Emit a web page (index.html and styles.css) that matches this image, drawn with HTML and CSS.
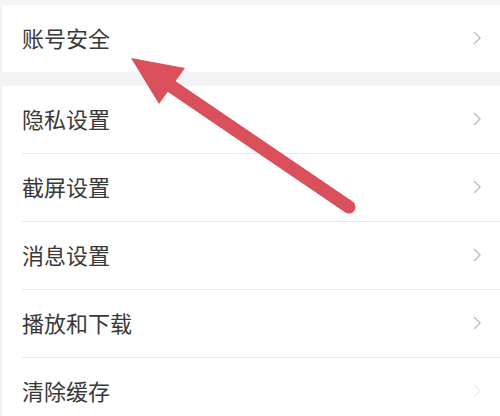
FILE: index.html
```html
<!DOCTYPE html>
<html lang="zh">
<head>
<meta charset="utf-8">
<link rel="stylesheet" href="styles.css">
</head>
<body>
<div class="page">
  <div class="group first">
    <div class="row"><span class="label">账号安全</span><svg class="chev" viewBox="0 0 8 14"><path d="M1 1 L7 7 L1 13"/></svg></div>
  </div>
  <div class="group">
    <div class="row"><span class="label">隐私设置</span><svg class="chev" viewBox="0 0 8 14"><path d="M1 1 L7 7 L1 13"/></svg></div>
    <div class="row"><span class="label">截屏设置</span><svg class="chev" viewBox="0 0 8 14"><path d="M1 1 L7 7 L1 13"/></svg></div>
    <div class="row"><span class="label">消息设置</span><svg class="chev" viewBox="0 0 8 14"><path d="M1 1 L7 7 L1 13"/></svg></div>
    <div class="row"><span class="label">播放和下载</span><svg class="chev" viewBox="0 0 8 14"><path d="M1 1 L7 7 L1 13"/></svg></div>
    <div class="row"><span class="label">清除缓存</span><svg class="chev faint" viewBox="0 0 8 14"><path d="M1 1 L7 7 L1 13"/></svg></div>
  </div>
  <svg class="arrow" viewBox="0 0 500 416" width="500" height="416">
    <line x1="349" y1="207" x2="168" y2="84" stroke="#d9505a" stroke-width="13" stroke-linecap="round"/>
    <polygon points="131,58 185,68 159,104" fill="#d9505a"/>
  </svg>
</div>
</body>
</html>
```

FILE: styles.css
```css
html, body {
  margin: 0;
  padding: 0;
  background: #f4f4f7;
}
.page {
  position: relative;
  width: 500px;
  height: 416px;
  overflow: hidden;
  padding-top: 5px;
  box-sizing: border-box;
  font-family: "Noto Sans CJK SC", "Noto Sans", sans-serif;
}
.group {
  background: #fff;
  border-left: 2px solid #f0f0f2;
  margin-bottom: 14px;
}
.row {
  height: 68px;
  display: flex;
  align-items: center;
  justify-content: space-between;
  margin-left: 20px;
  padding-right: 19px;
  border-top: 1px solid #e9e9ec;
  box-sizing: border-box;
}
.group .row:first-child {
  border-top: none;
  height: 67px;
}
.label {
  font-size: 22px;
  color: #383838;
  line-height: 1;
  margin-bottom: 4px;
}
.chev {
  width: 8px;
  height: 14px;
  fill: none;
  stroke: #bdbdbd;
  stroke-width: 1.4;
  margin-bottom: 2px;
}
.chev.faint {
  stroke: #ececec;
}
.arrow {
  position: absolute;
  left: 0;
  top: 0;
}
```
